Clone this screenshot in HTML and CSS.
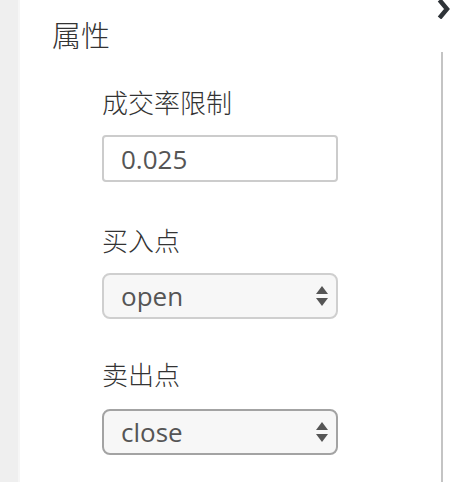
FILE: index.html
```html
<!DOCTYPE html>
<html lang="zh-CN">
<head>
    <meta charset="UTF-8">
    <meta name="viewport" content="width=device-width, initial-scale=1.0">
    <title>属性</title>
    <link rel="stylesheet" href="styles.css">
</head>
<body>
    <div class="gutter"></div>

    <div class="panel">
        <h2 class="panel-title">属性</h2>

        <div class="field">
            <label class="field-label" for="rate">成交率限制</label>
            <input class="text-input" id="rate" type="text" value="0.025">
        </div>

        <div class="field">
            <label class="field-label" for="buy">买入点</label>
            <div class="select-wrap">
                <select class="select-input" id="buy">
                    <option>open</option>
                    <option>close</option>
                </select>
                <svg class="select-arrows" width="12" height="20" viewBox="0 0 12 20">
                    <path d="M6 0 L12 8 L0 8 Z" fill="#555"/>
                    <path d="M0 12 L12 12 L6 20 Z" fill="#555"/>
                </svg>
            </div>
        </div>

        <div class="field">
            <label class="field-label" for="sell">卖出点</label>
            <div class="select-wrap">
                <select class="select-input active" id="sell">
                    <option>close</option>
                    <option>open</option>
                </select>
                <svg class="select-arrows" width="12" height="20" viewBox="0 0 12 20">
                    <path d="M6 0 L12 8 L0 8 Z" fill="#555"/>
                    <path d="M0 12 L12 12 L6 20 Z" fill="#555"/>
                </svg>
            </div>
        </div>
    </div>

    <div class="rail">
        <svg class="collapse-icon" width="14" height="19" viewBox="0 0 14 19">
            <path d="M2.5 0 L10 9 L2.5 18" fill="none" stroke="#2e3338" stroke-width="4.5" stroke-linejoin="miter"/>
        </svg>
        <div class="rail-line"></div>
    </div>
</body>
</html>
```

FILE: styles.css
```css
html, body {
    height: 100%;
}

body {
    margin: 0;
    padding: 0;
    display: flex;
    background-color: white;
    font-family: "Noto Sans CJK SC", "Noto Sans", sans-serif;
    font-weight: 300;
    color: #333;
    overflow: hidden;
}

.gutter {
    width: 18px;
    background-color: #efefef;
    border-right: 2px solid #f6f6f6;
}

.panel {
    flex: 1;
    padding: 0 0 0 32px;
}

.panel-title {
    margin: 14px 0 0 0;
    font-size: 29px;
    font-weight: 300;
    line-height: 40px;
}

.field {
    margin-left: 50px;
    width: 236px;
}

.field:first-of-type {
    margin-top: 30px;
}

.field + .field {
    margin-top: 40px;
}

.field-label {
    display: block;
    font-size: 26px;
    line-height: 36px;
    margin-bottom: 15px;
}

.field + .field + .field .field-label {
    margin-bottom: 17px;
}

.field + .field + .field {
    margin-top: 37px;
}

.text-input,
.select-input {
    display: block;
    box-sizing: border-box;
    width: 236px;
    margin: 0;
    padding: 0 0 0 17px;
    font-family: "Open Sans", sans-serif;
    font-weight: normal;
    font-size: 26px;
    color: #555;
    outline: none;
}

.text-input {
    height: 47px;
    border: 2px solid #ccc;
    border-radius: 4px;
    background-color: white;
}

.select-wrap {
    position: relative;
}

.select-input {
    height: 46px;
    border: 2px solid #cfcfcf;
    border-radius: 8px;
    background-color: #f7f7f7;
    appearance: none;
    -webkit-appearance: none;
}

.select-input.active {
    border-color: #a3a3a3;
}

.select-arrows {
    position: absolute;
    right: 10px;
    top: 13px;
}

.rail {
    width: 20px;
    margin-right: 24px;
    display: flex;
    flex-direction: column;
    align-items: center;
}

.collapse-icon {
    display: block;
    margin-left: 3px;
}

.rail-line {
    margin-top: 33px;
    width: 2px;
    flex: 1;
    background-color: #c4c4c4;
}
```
